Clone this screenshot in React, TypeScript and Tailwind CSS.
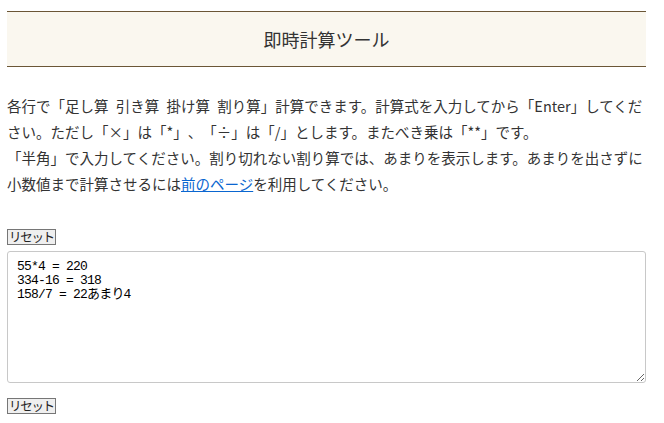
import React, { useState } from 'react';

const initialLog = '55*4 = 220\n334-16 = 318\n158/7 = 22あまり4';

function ResetButton({ onClick, className = '' }: { onClick: () => void; className?: string }) {
  return (
    <button
      onClick={onClick}
      className={`self-start h-[16px] px-px border border-[#767676] bg-[#efefef] text-[12.5px] leading-[14px] text-[#222] tracking-[-1.3px] font-['Noto_Sans_CJK_JP',sans-serif] ${className}`}
    >
      リセット
    </button>
  );
}

export default function App() {
  const [log, setLog] = useState(initialLog);

  return (
    <div className="w-[664px] h-[423px] bg-white pl-[7px] pr-[18px] pt-[11px] font-['Noto_Sans_CJK_JP','Noto_Sans',sans-serif] text-[#333] overflow-hidden">
      {/* Title */}
      <div className="h-[56px] flex items-center justify-center bg-[#faf7ef] border-y border-[#6b5636]">
        <h1 className="text-[18px] text-[#333] leading-none">即時計算ツール</h1>
      </div>

      {/* Description */}
      <p className="mt-[26px] text-[14.5px] leading-[26px] text-[#333] [text-spacing-trim:space-all] [word-spacing:4px]">
        各行で「足し算 引き算 掛け算 割り算」計算できます。計算式を入力してから「Enter」してください。ただし「×」は「*」、「÷」は「/」とします。またべき乗は「**」です。
        <br />
        「半角」で入力してください。割り切れない割り算では、あまりを表示します。あまりを出さずに小数値まで計算させるには
        <a href="#" className="text-[#0a66d0] underline">前のページ</a>
        を利用してください。
      </p>

      <div className="mt-[32px] flex flex-col">
        <ResetButton onClick={() => setLog('')} />
        <textarea
          value={log}
          onChange={(e) => setLog(e.target.value)}
          className="mt-[6px] w-full h-[132px] border border-[#c8c8c8] rounded-[3px] px-[9px] py-[8px] text-[13px] leading-[14px] tracking-[-0.8px] text-black font-['Liberation_Mono','Noto_Sans_CJK_JP',monospace] resize-y outline-none"
        />
        <ResetButton onClick={() => setLog('')} className="mt-[15px]" />
      </div>
    </div>
  );
}
